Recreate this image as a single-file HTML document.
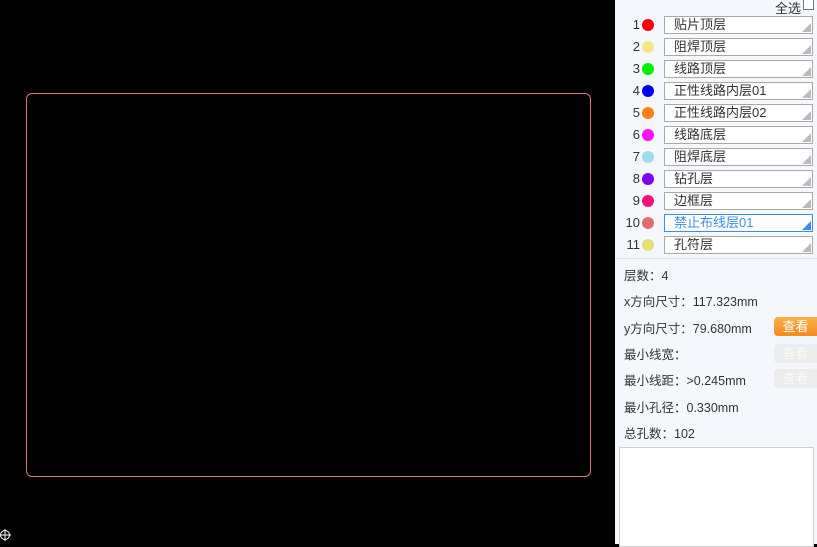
<!DOCTYPE html>
<html><head><meta charset="utf-8"><style>
*{margin:0;padding:0;box-sizing:border-box}
body{width:817px;height:544px;background:#000;position:relative;overflow:hidden;font-family:"Liberation Sans","Noto Sans CJK SC",sans-serif;font-size:13px;color:#333}
.board{position:absolute;left:26px;top:93px;width:565px;height:384px;border:1px solid #d9787a;border-radius:6px}
.panel{position:absolute;left:615px;top:0;width:202px;height:544px;background:#f4f8fc}
.abs{position:absolute}
.row{position:absolute;left:0;height:22px;width:202px}
.num{position:absolute;right:177px;top:3px;font-size:13px;color:#333}
.dot{position:absolute;left:27px;top:5px;width:12px;height:12px;border-radius:50%}
.inp{position:absolute;left:49px;top:2px;width:149px;height:18px;border:1px solid #a9a9a9;background:#fff;font-size:13px;line-height:16px;padding-left:9px;color:#333}
.inp:after{content:"";position:absolute;right:1px;bottom:1px;width:0;height:0;border-left:9px solid transparent;border-bottom:9px solid #bbb}
.inp.act{border-color:#3b8ee8;color:#3b8ee8}
.inp.act:after{border-bottom-color:#3b8ee8}
.info{position:absolute;left:9px;font-size:12.5px;color:#333}
.btn{position:absolute;left:159px;width:43px;height:19px;border-radius:4px 0 0 4px;color:#fff;font-size:13px;text-align:center;line-height:19px}
.or{background:linear-gradient(#fbb04a,#f48a1c)}
.gr{background:#ececec;color:#fafafa}
</style></head><body>
<div class="board"></div>
<svg class="abs" style="left:0;top:529px" width="12" height="12" viewBox="0 0 12 12"><circle cx="5" cy="6" r="4.5" fill="none" stroke="#fff" stroke-width="1"/><path d="M0 6H11M5 0V12" stroke="#fff" stroke-width="1"/></svg>
<div class="panel">
<div class="abs" style="left:160px;top:-2px;font-size:13px">全选</div>
<div class="abs" style="left:188px;top:-1px;width:11px;height:11px;border:1px solid #777;background:#fff"></div>
<div class="row" style="top:14px"><span class="num">1</span><span class="dot" style="background:#ff0000"></span><div class="inp">贴片顶层</div></div>
<div class="row" style="top:36px"><span class="num">2</span><span class="dot" style="background:#f5e58a"></span><div class="inp">阻焊顶层</div></div>
<div class="row" style="top:58px"><span class="num">3</span><span class="dot" style="background:#00ee00"></span><div class="inp">线路顶层</div></div>
<div class="row" style="top:80px"><span class="num">4</span><span class="dot" style="background:#0000f0"></span><div class="inp">正性线路内层01</div></div>
<div class="row" style="top:102px"><span class="num">5</span><span class="dot" style="background:#ff8010"></span><div class="inp">正性线路内层02</div></div>
<div class="row" style="top:124px"><span class="num">6</span><span class="dot" style="background:#ff10ff"></span><div class="inp">线路底层</div></div>
<div class="row" style="top:146px"><span class="num">7</span><span class="dot" style="background:#9edcef"></span><div class="inp">阻焊底层</div></div>
<div class="row" style="top:168px"><span class="num">8</span><span class="dot" style="background:#8000f0"></span><div class="inp">钻孔层</div></div>
<div class="row" style="top:190px"><span class="num">9</span><span class="dot" style="background:#f0107a"></span><div class="inp">边框层</div></div>
<div class="row" style="top:212px"><span class="num">10</span><span class="dot" style="background:#e06c6c"></span><div class="inp act">禁止布线层01</div></div>
<div class="row" style="top:234px"><span class="num">11</span><span class="dot" style="background:#e2e070"></span><div class="inp">孔符层</div></div>
<div class="abs" style="left:0;top:258px;width:202px;height:1px;background:#dde2e8"></div>
<div class="info" style="top:265px">层数：4</div>
<div class="info" style="top:291px">x方向尺寸：117.323mm</div>
<div class="info" style="top:318px">y方向尺寸：79.680mm</div>
<div class="btn or" style="top:317px">查看</div>
<div class="info" style="top:344px">最小线宽：</div>
<div class="btn gr" style="top:344px">查看</div>
<div class="info" style="top:370px">最小线距：&gt;0.245mm</div>
<div class="btn gr" style="top:369px">查看</div>
<div class="info" style="top:397px">最小孔径：0.330mm</div>
<div class="info" style="top:423px">总孔数：102</div>
<div class="abs" style="left:4px;top:447px;width:195px;height:100px;border:1px solid #ccc;background:#fff"></div>
</div>
</body></html>
